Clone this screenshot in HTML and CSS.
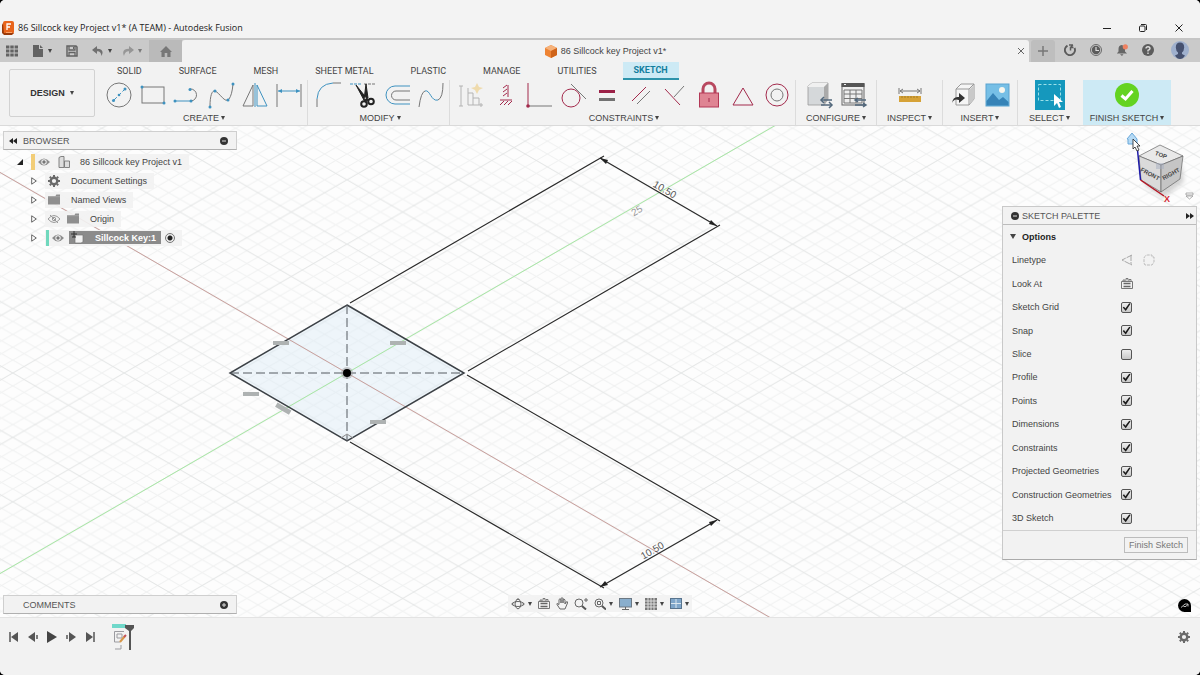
FILE: index.html
```html
<!DOCTYPE html>
<html lang="en">
<head>
<meta charset="utf-8">
<title>86 Sillcock key Project v1* (A TEAM) - Autodesk Fusion</title>
<link rel="stylesheet" href="styles.css">
</head>
<body>
<svg class="defs" width="0" height="0" aria-hidden="true">
  <symbol id="eye" viewBox="0 0 12 8"><path d="M0 4Q6-3 12 4Q6 11 0 4Z" fill="#8d8d8d"/><circle cx="6" cy="4" r="2.7" fill="#f2f2f2"/><circle cx="6" cy="4" r="1.7" fill="#777"/></symbol>
  <symbol id="folder" viewBox="0 0 13 11"><path d="M0 2H8L9 0H13V11H0Z" fill="#8f8f8f"/><path d="M0 2.500H13" stroke="#a9a9a9"/></symbol>
  <symbol id="gear" viewBox="0 0 12 12"><circle cx="6" cy="6" r="3.300" fill="none" stroke="#6a6a6a" stroke-width="2.400"/><path d="M6 0V2M6 10V12M0 6H2M10 6H12M1.800 1.800L3 3M9 9l1.200 1.200M10.200 1.800L9 3M3 9l-1.200 1.200" stroke="#6a6a6a" stroke-width="2"/></symbol>
  <symbol id="expand" viewBox="0 0 6 8"><path d="M.7.8L5.300 4L.7 7.200Z" fill="#fff" stroke="#555" stroke-width=".9"/></symbol>
  <symbol id="lookat" viewBox="0 0 12 11"><path d="M.5 3.500H11.500V10.500H.5ZM2 3.500V2H4V3.500M5 2.500V.5H7V2.500M8 3.500V1.500H10V3.500" fill="none" stroke="#777"/><path d="M2.500 5.500H9.500M2.500 8.500H9.500" stroke="#666" stroke-width="1.500"/></symbol>
</svg>
<div class="app">
  <header class="titlebar">
    <svg class="app-icon" width="12" height="14" viewBox="0 0 12 14"><rect x="1" width="11" height="13" rx="2" fill="#e8641b"/><path d="M1 2L0 4V12L2 14H10L12 12H2Z" fill="#9b3908"/><path d="M5 9V3H9M5 6H8" fill="none" stroke="#fff" stroke-width="1.300"/><path d="M4 11.500H10" stroke="#ffb27c" stroke-width=".8"/></svg>
    <h1 class="app-title">86 Sillcock key Project v1* (A TEAM) - Autodesk Fusion</h1>
    <div class="window-controls">
      <button aria-label="Minimize"><svg width="10" height="10" viewBox="0 0 10 10"><path d="M1 5.500H9" stroke="#222"/></svg></button>
      <button aria-label="Restore"><svg width="10" height="10" viewBox="0 0 10 10"><rect x="1.500" y="3" width="5.500" height="5.500" rx="1" fill="none" stroke="#222"/><path d="M3 1.500H7.500Q8.500 1.500 8.500 2.500V7" fill="none" stroke="#222"/></svg></button>
      <button aria-label="Close"><svg width="10" height="10" viewBox="0 0 10 10"><path d="M1.500 1.500L8.500 8.500M8.500 1.500L1.500 8.500" stroke="#222"/></svg></button>
    </div>
  </header>

  <div class="tabbar">
    <div class="quick">
      <button aria-label="Data panel"><svg width="12" height="12" viewBox="0 0 12 12"><path d="M0 2H12M0 6H12M0 10H12" stroke="#636363" stroke-width="3" stroke-dasharray="3.400 .9"/></svg></button>
      <button class="file" aria-label="File"><svg width="12" height="12" viewBox="0 0 12 12"><path d="M1 0H7V4H11V12H1Z" fill="#636363"/><path d="M8 0L11 3H8Z" fill="#636363"/></svg><i class="caret"></i></button>
      <button class="save" aria-label="Save"><svg width="12" height="12" viewBox="0 0 12 12"><path d="M1 1H10L11 2V11H1Z" fill="none" stroke="#636363" stroke-width="1.500"/><path d="M3 1V5H9V1M3 11V7.500H9V11" fill="none" stroke="#636363" stroke-width="1.300"/><path d="M7.500 2V4" stroke="#636363"/></svg></button>
      <button class="undo" aria-label="Undo"><svg width="12" height="12" viewBox="0 0 12 12"><path d="M5 1L0 5L5 9V6.300Q9 6 9.500 11Q13 4 5 3.700Z" fill="#707070"/></svg><i class="caret"></i></button>
      <button class="redo" aria-label="Redo"><svg width="12" height="12" viewBox="0 0 12 12"><path d="M7 1L12 5L7 9V6.300Q3 6 2 11Q-1 4 7 3.700Z" fill="#969696"/></svg><i class="caret"></i></button>
    </div>
    <button class="home" aria-label="Home"><svg width="12" height="11" viewBox="0 0 12 11"><path d="M0 6L6 0L12 6H10.500V11H7.300V7H4.700V11H1.500V6Z" fill="#777"/></svg></button>
    <div class="doc-tab">
      <span class="doc-name"><svg width="12" height="13" viewBox="0 0 12 13"><path d="M6 0L12 3V10L6 13L0 10V3Z" fill="#ee8434"/><path d="M6 0L12 3L6 6L0 3Z" fill="#f6b27b"/><path d="M6 6L12 3V10L6 13Z" fill="#cf641a"/></svg>86 Sillcock key Project v1*</span>
      <button class="tab-close" aria-label="Close document"><svg width="8" height="8" viewBox="0 0 8 8"><path d="M1 1L7 7M7 1L1 7" stroke="#666"/></svg></button>
    </div>
    <button class="new-tab" aria-label="New tab"><svg width="10" height="10" viewBox="0 0 10 10"><path d="M5 0V10M0 5H10" stroke="#777" stroke-width="1.500"/></svg></button>
    <div class="account">
      <button aria-label="Extensions"><svg width="12" height="12" viewBox="0 0 12 12"><path d="M3.500 1.700A5 5 0 1 0 10.500 4" fill="none" stroke="#5c5c5c" stroke-width="2"/><path d="M6.500 6.500V3.500H9.500M6.500 3.500L9 1M5 1H9" fill="none" stroke="#5c5c5c" stroke-width="1.500"/></svg></button>
      <button aria-label="Job status"><svg width="12" height="12" viewBox="0 0 12 12"><circle cx="6" cy="6" r="5.500" fill="none" stroke="#6a6a6a"/><circle cx="6" cy="6" r="4.200" fill="#5c5c5c"/><path d="M6 3V6.500H9" fill="none" stroke="#ddd" stroke-width="1.200"/></svg></button>
      <button aria-label="Notifications"><svg width="12" height="12" viewBox="0 0 12 12"><path d="M5.500 1Q2.500 1.500 2.500 5V7.500L.8 9.500H11L9 7.500V5Q9 1.500 5.500 1ZM4 10.200H7.500L6 12Z" fill="#666"/><circle cx="9.300" cy="2.800" r="2.600" fill="#ee8161"/></svg></button>
      <button aria-label="Help"><svg width="12" height="12" viewBox="0 0 12 12"><circle cx="6" cy="6" r="6" fill="#5c5c5c"/><path d="M4 4.500Q4 2.700 6 2.700T8 4.500Q8 5.600 6 6.300V7.500M6 8.500V10" fill="none" stroke="#ddd" stroke-width="1.400"/></svg></button>
      <button class="avatar" aria-label="Profile"><svg width="18" height="18" viewBox="0 0 18 18"><circle cx="9" cy="9" r="9" fill="#9fb0cd"/><path d="M9 1.500Q13.200 1.500 13.200 6.500Q13 10 11 11.500V13L14 14.500Q12 18 9 18T4 14.500L7 13V11.500Q5 10 4.800 6.500Q4.800 1.500 9 1.500Z" fill="#46516f"/></svg></button>
    </div>
  </div>

  <div class="ribbon">
    <button class="workspace">DESIGN <i class="caret"></i></button>
    <div class="ribbon-main">
      <nav class="ribbon-tabs">
        <button>SOLID</button><button>SURFACE</button><button>MESH</button><button>SHEET METAL</button><button>PLASTIC</button><button>MANAGE</button><button>UTILITIES</button><button class="active">SKETCH</button>
      </nav>
      <div class="groups">
        <section class="group">
          <div class="tools">
            <button aria-label="Circle"><svg viewBox="0 0 30 30"><circle cx="15" cy="15" r="12" class="g"/><path d="M10 20L20 10" class="b" stroke-dasharray="4 2"/><g class="p"><circle cx="9.500" cy="20.500" r="1.500"/><circle cx="15" cy="15" r="1.300"/><circle cx="21" cy="9" r="1.500"/></g></svg></button>
            <button aria-label="Rectangle"><svg viewBox="0 0 30 30"><rect x="4" y="7" width="22" height="16" class="g"/><g class="p"><circle cx="4" cy="7" r="1.500"/><circle cx="26" cy="23" r="1.500"/></g></svg></button>
            <button aria-label="Line"><svg viewBox="0 0 30 30"><path d="M3 21H19" class="b"/><path d="M19 21A6 6 0 0 0 18 9" class="g"/><g class="p"><circle cx="3" cy="21" r="1.500"/><circle cx="19" cy="21" r="1.500"/><circle cx="18" cy="9.500" r="1.500"/></g></svg></button>
            <button aria-label="Spline"><svg viewBox="0 0 30 30"><path d="M4 26C4 16 6 10 9 11C14 13 19 24 23 19Q26 15 27 4" class="g"/><g class="p"><circle cx="4" cy="27" r="1.500"/><circle cx="9" cy="11" r="1.500"/><circle cx="22" cy="20" r="1.500"/><circle cx="27" cy="4" r="1.500"/></g></svg></button>
            <button aria-label="Mirror"><svg viewBox="0 0 30 30"><path d="M13 5V26H3Z" class="g"/><path d="M17 5V26H27Z" class="b"/><path d="M15 3V27" class="b"/></svg></button>
            <button aria-label="Sketch dimension"><svg viewBox="0 0 30 30"><path d="M3 4V27M27 4V27" class="g"/><path d="M4 11H26" class="b"/><path d="M4 11l4-2v4ZM26 11l-4-2v4Z" class="p"/></svg></button>
          </div>
          <button class="label">CREATE <i class="caret"></i></button>
        </section>
        <section class="group">
          <div class="tools">
            <button aria-label="Fillet"><svg viewBox="0 0 30 30"><path d="M3 27V19" class="g"/><path d="M3 19Q4 4 19 3" class="b"/><path d="M19 3H27" class="g"/></svg></button>
            <button aria-label="Trim"><svg viewBox="0 0 30 30"><path d="M2 4H14" class="b" stroke-dasharray="3 1"/><path d="M16 4H28" class="g" stroke-dasharray="3 1"/><path d="M8 5L20 20L17 22ZM18 4L16 20L20 18Z" fill="#222" stroke="#222"/><circle cx="16" cy="24" r="2.800" fill="none" stroke="#222" stroke-width="2"/><circle cx="23" cy="21.500" r="2.800" fill="none" stroke="#222" stroke-width="2"/></svg></button>
            <button aria-label="Offset"><svg viewBox="0 0 30 30"><path d="M28 6H13A9 9 0 0 0 13 24H28" class="b"/><path d="M28 11H14A4 4 0 0 0 14 20H28" class="g"/></svg></button>
            <button aria-label="Extend curve"><svg viewBox="0 0 30 30"><path d="M3 27Q5 12 9 11" class="g"/><path d="M9 11C14 9 15 22 22 20" class="b"/><path d="M22 20Q27 18 27 3" class="g"/></svg></button>
          </div>
          <button class="label">MODIFY <i class="caret"></i></button>
        </section>
        <section class="group">
          <div class="tools">
            <button aria-label="Auto constrain"><svg viewBox="0 0 30 30" opacity=".5"><path d="M5 6V26M12 8V25H27M12 13H17V25M17 18H23V25" class="g"/><path d="M3 6H7M3 26H7M25 23V27" class="g"/><path d="M21 3L23 7L27 8L23 10L21 14L19 10L15 8L19 7Z" fill="#edc56b"/></svg></button>
            <button aria-label="Horizontal/Vertical"><svg viewBox="0 0 30 30"><path d="M18 5V17M10 20H22M13 8l4-3M13 12l4-3M13 16l4-3M10 25l4-4M14 25l4-4M18 25l4-4" class="r"/></svg></button>
            <button aria-label="Coincident"><svg viewBox="0 0 30 30"><path d="M4 3V26" class="r"/><path d="M4 26H28" class="g"/><circle cx="4" cy="26" r="1.800" fill="#a32a4c"/></svg></button>
            <button aria-label="Tangent"><svg viewBox="0 0 30 30"><circle cx="13" cy="18" r="9" class="r"/><path d="M13 4L28 19" class="g"/></svg></button>
            <button aria-label="Equal"><svg viewBox="0 0 30 30"><path d="M7 11.500H23" stroke="#9b2147" stroke-width="3"/><path d="M7 19.500H23" stroke="#727272" stroke-width="3"/></svg></button>
            <button aria-label="Parallel"><svg viewBox="0 0 30 30"><path d="M6 21L20 7" class="r"/><path d="M11 24L24 11" class="g"/></svg></button>
            <button aria-label="Perpendicular"><svg viewBox="0 0 30 30"><path d="M5 9L20 25" class="r"/><path d="M14 17L24 6" class="g"/></svg></button>
            <button aria-label="Fix"><svg viewBox="0 0 30 30"><path d="M9 13V9A6 6 0 0 1 21 9V13" fill="none" stroke="#b8485f" stroke-width="3"/><rect x="5.500" y="13" width="19" height="14" fill="#df8493" stroke="#b33856"/><path d="M15 18V22" class="r"/></svg></button>
            <button aria-label="Midpoint"><svg viewBox="0 0 30 30"><path d="M15 8L25 25H5Z" class="r"/></svg></button>
            <button aria-label="Concentric"><svg viewBox="0 0 30 30"><circle cx="15" cy="15" r="11" class="r"/><circle cx="15" cy="15" r="6" class="g"/></svg></button>
          </div>
          <button class="label">CONSTRAINTS <i class="caret"></i></button>
        </section>
        <section class="group wide">
          <div class="tools">
            <button aria-label="Configure model"><svg viewBox="0 0 30 30"><path d="M4 6L8 3H24V19L20 25H4Z" fill="#d5d8da" stroke="#999" stroke-width=".8"/><path d="M4 6L8 3H24L20 7H4Z" fill="#f0f0f0"/><path d="M20 7L24 3V19L20 25Z" fill="#aaa"/><path d="M17 20H28M17 25H28" stroke="#52677b" stroke-width="1.500"/><path d="M20 17L17 20L20 23M25 22L28 25L25 28" fill="none" stroke="#52677b" stroke-width="1.500"/></svg></button>
            <button aria-label="Configuration table"><svg viewBox="0 0 30 30"><rect x="4" y="4" width="22" height="21" fill="#eee" stroke="#666"/><path d="M3.500 5H26.500" stroke="#555" stroke-width="4"/><path d="M6 4.500H8" stroke="#eee"/><path d="M6 10H24V23H6ZM6 14H24M6 18.500H24M12 10V23M18 10V23" fill="none" stroke="#777"/><path d="M17 20H28M17 25H28M20 18L17 20L20 22M25 23L28 25L25 27" fill="none" stroke="#52677b" stroke-width="1.500"/></svg></button>
          </div>
          <button class="label">CONFIGURE <i class="caret"></i></button>
        </section>
        <section class="group inspect">
          <div class="tools">
            <button aria-label="Measure"><svg viewBox="0 0 30 30"><path d="M4 8V14M26 8V14M5 11H25M8 9L5 11L8 13M22 9L25 11L22 13" class="g"/><rect x="4" y="16" width="22" height="6" fill="#d6a237"/><path d="M7 16V18M10 16V18M13 16V18M16 16V18M19 16V18M22 16V18" stroke="#8f6d24" stroke-width=".7"/></svg></button>
          </div>
          <button class="label">INSPECT <i class="caret"></i></button>
        </section>
        <section class="group insert">
          <div class="tools">
            <button aria-label="Insert derive"><svg viewBox="0 0 30 30"><path d="M8 9L13 4H26V19L21 25H8Z" fill="#f5f5f5" stroke="#999"/><path d="M8 9H21V25M21 9L26 4" fill="none" stroke="#999"/><path d="M22 9L26 5V19L22 24Z" fill="#c9c9c9"/><path d="M4 23Q5 16 11 17V13L17 18L11 23V20Q6 18 4 23Z" fill="#333"/></svg></button>
            <button aria-label="Canvas"><svg viewBox="0 0 30 30"><rect x="4" y="4" width="23" height="22" fill="#76bfe6" stroke="#5aa3cf"/><circle cx="20" cy="10" r="3" fill="#f6f6ee"/><path d="M4.500 21L11 13L17 20L21 17L26.500 22V25.500H4.500Z" fill="#3683b7"/></svg></button>
          </div>
          <button class="label">INSERT <i class="caret"></i></button>
        </section>
        <section class="group select">
          <div class="tools">
            <button aria-label="Select"><svg viewBox="0 0 30 30"><rect width="30" height="30" fill="#1598bd"/><rect x="3.500" y="4.500" width="22" height="16" fill="none" stroke="#9ce0e8" stroke-dasharray="3 2"/><path d="M19 14V26L22 23L24 28L26 27L24 22H28Z" fill="#fff"/></svg></button>
          </div>
          <button class="label">SELECT <i class="caret"></i></button>
        </section>
        <section class="group finish">
          <div class="tools">
            <button aria-label="Finish sketch"><svg viewBox="0 0 30 30"><circle cx="15" cy="15" r="12" fill="#63d321"/><path d="M9.500 15.500L13.500 19L20.500 11" fill="none" stroke="#fff" stroke-width="3"/></svg></button>
          </div>
          <button class="label">FINISH SKETCH <i class="caret"></i></button>
        </section>
      </div>
    </div>
  </div>

  <main class="viewport">
    <svg class="canvas" viewBox="0 126 1200 491" preserveAspectRatio="xMidYMid slice" role="img" aria-label="Sketch canvas">
      <defs>
        <pattern id="grid" x="347" y="373" width="111.400" height="64.400" patternUnits="userSpaceOnUse">
          <path d="M22.280 0L111.400 51.520M44.560 0L111.400 38.640M66.840 0L111.400 25.760M89.120 0L111.400 12.880M0 12.880L89.120 64.400M0 25.760L66.840 64.400M0 38.640L44.560 64.400M0 51.520L22.280 64.400" stroke="#f0f1f1" stroke-width="1"/>
          <path d="M89.120 0L0 51.520M66.840 0L0 38.640M44.560 0L0 25.760M22.280 0L0 12.880M111.400 12.880L22.280 64.400M111.400 25.760L44.560 64.400M111.400 38.640L66.840 64.400M111.400 51.520L89.120 64.400" stroke="#f0f1f1" stroke-width="1"/>
          <path d="M0 0L111.400 64.400M0 64.400L111.400 0" stroke="#e2e4e4" stroke-width="1"/>
        </pattern>
      </defs>
      <rect x="-1200" y="-400" width="3600" height="1500" fill="#fdfdfd"/>
      <rect x="-1200" y="-400" width="3600" height="1500" fill="url(#grid)"/>
      <path d="M347 305L464 373L347 441L230 373Z" fill="#dcecf7" fill-opacity=".45"/>
      <path d="M-345 -27L1039 773" stroke="#c9a09d" stroke-width="1"/>
      <path d="M-345 773L1039 -27" stroke="#a8e8a5" stroke-width="1"/>
      <path d="M347 305L464 373L347 441L230 373Z" fill="none" stroke="#3c4146" stroke-width="1.500"/>
      <path d="M230 373H464M347 305V441" stroke="#555b60" stroke-width="1" stroke-dasharray="9 4"/>
      <g stroke="#2b2b2b" stroke-width="1.200" fill="none">
        <path d="M350 303L604 156M468 371L720 225M467 375L720 521M350 442L604 588"/>
        <path d="M600 158L717 226M600 587L717 520"/>
      </g>
      <path d="M600 158L608 160L606 164ZM717 226L709 224L711 220ZM600 587L608 585L605 581ZM717 520L709 522L711 526Z" fill="#222"/>
      <g fill="#aeb2b2"><rect x="273" y="341" width="16" height="4"/><rect x="390" y="341" width="16" height="4"/><rect x="243" y="392" width="16" height="4"/><rect x="370" y="420" width="16" height="4"/><rect x="275" y="406" width="16" height="5" transform="rotate(30 283 409)"/></g>
      <path d="M341 438L347 434L353 438" fill="none" stroke="#888"/>
      <circle cx="347" cy="373" r="6" fill="#999" fill-opacity=".5"/><circle cx="347" cy="373" r="4" fill="#000"/>
      <text class="dim" x="665" y="193" transform="rotate(30 665 189)">10.50</text>
      <text class="dim" x="652" y="554" transform="rotate(-30 652 550)">10.50</text>
      <text class="dim faint" x="637" y="214" transform="rotate(-30 637 211)">25</text>
    </svg>
    <div class="overlay">
      <aside class="left">
        <section>
          <header class="panel-head"><svg width="8" height="6" viewBox="0 0 8 6"><path d="M4 0V6L0 3ZM8 0V6L4 3Z" fill="#222"/></svg><h2>BROWSER</h2><button class="round" aria-label="Collapse browser"><svg width="8" height="8" viewBox="0 0 8 8"><circle cx="4" cy="4" r="4" fill="#333"/><path d="M2 4H6" stroke="#ddd"/></svg></button></header>
          <ul class="tree">
            <li class="root"><svg width="6" height="6" viewBox="0 0 6 6"><path d="M6 0V6H0Z" fill="#222"/></svg><div class="chip"><i class="bar amber"></i><svg width="12" height="8"><use href="#eye"/></svg><svg class="comp" width="12" height="12" viewBox="0 0 12 12"><path d="M1 1.500L3 .5H6V11.500H1ZM6.500 5H11.500V11.500H6.500Z" fill="#ddd" stroke="#777" stroke-width=".9"/></svg><span>86 Sillcock key Project v1</span></div></li>
            <li><svg width="6" height="8"><use href="#expand"/></svg><div class="chip"><svg class="lead" width="12" height="12"><use href="#gear"/></svg><span>Document Settings</span></div></li>
            <li><svg width="6" height="8"><use href="#expand"/></svg><div class="chip"><svg class="lead" width="12" height="11"><use href="#folder"/></svg><span>Named Views</span></div></li>
            <li><svg width="6" height="8"><use href="#expand"/></svg><div class="chip"><svg class="lead" width="12" height="10" viewBox="0 0 12 10"><path d="M0 5Q6-2 12 5Q6 12 0 5ZM2 1L10 9" fill="none" stroke="#999"/><circle cx="6" cy="5" r="1.700" fill="none" stroke="#999"/></svg><svg class="second" width="12" height="11"><use href="#folder"/></svg><span>Origin</span></div></li>
            <li><svg width="6" height="8"><use href="#expand"/></svg><div class="chip current"><i class="bar teal"></i><svg width="12" height="8"><use href="#eye"/></svg><b class="selected"><svg width="13" height="13" viewBox="0 0 13 13"><path d="M4 4H12V11L10 12H4Z" fill="#f1f1f1" stroke="#777" stroke-width=".7"/><path d="M3 0V6M0 3H6M1 6H5" stroke="#333"/></svg>Sillcock Key:1</b><input type="radio" checked aria-label="Activate Sillcock Key:1"></div></li>
          </ul>
        </section>
        <header class="panel-head comments"><h2>COMMENTS</h2><button class="round" aria-label="Expand comments"><svg width="8" height="8" viewBox="0 0 8 8"><circle cx="4" cy="4" r="4" fill="#333"/><path d="M2 4H6M4 2V6" stroke="#ddd"/></svg></button></header>
      </aside>

      <div class="navbar">
        <button aria-label="Orbit"><svg width="14" height="12" viewBox="0 0 14 12"><ellipse cx="7" cy="6" rx="5.500" ry="2.500" class="s"/><path d="M7 1Q4 2 4 6T7 11Q10 10 10 6T7 1M5.500 2L7 .5L8.500 2M2 4.500L.8 6L2 7.500M12 4.500L13.200 6L12 7.500" class="s"/></svg><i class="caret"></i></button>
        <button aria-label="Look at"><svg width="12" height="11"><use href="#lookat"/></svg></button>
        <button aria-label="Pan"><svg width="12" height="13" viewBox="0 0 12 13"><path d="M4 12L1 7.500Q0 5.500 3 7.500V2.500Q4 1 5 2.500V6V1.500Q6-.2 7 1.500V6V2.500Q8 1 9 3V7L10 5Q12 4 11.500 6L9 12Z" class="s"/></svg></button>
        <button aria-label="Zoom"><svg width="14" height="12" viewBox="0 0 14 12"><circle cx="5" cy="5" r="4" class="s"/><path d="M8 8L12 11.500" stroke="#555" stroke-width="2"/><path d="M10 2H14M12 0V4" class="s"/></svg></button>
        <button aria-label="Fit"><svg width="12" height="12" viewBox="0 0 12 12"><circle cx="5" cy="5" r="4" class="s"/><path d="M3.500 3.500H6.500V6.500H3.500Z" class="s"/><path d="M8 8L12 11.500" stroke="#555" stroke-width="2"/></svg><i class="caret"></i></button>
        <button aria-label="Display settings"><svg width="13" height="12" viewBox="0 0 13 12"><rect x=".5" y=".5" width="12" height="8.500" fill="#89aecd" stroke="#6c7883"/><path d="M6.500 9V11M3 11.500H10" stroke="#666"/></svg><i class="caret"></i></button>
        <button aria-label="Grid and snaps"><svg width="12" height="12" viewBox="0 0 12 12"><rect width="12" height="12" fill="#777"/><path d="M0 3H12M0 6H12M0 9H12M3 0V12M6 0V12M9 0V12" stroke="#ddd"/></svg><i class="caret"></i></button>
        <button aria-label="Viewports"><svg width="12" height="11" viewBox="0 0 12 11"><rect x=".5" y=".5" width="11" height="10" fill="#7fa6ca" stroke="#58748e"/><path d="M6 1V10M1 5.500H11" stroke="#dbe7ef"/></svg><i class="caret"></i></button>
      </div>

      <aside class="right">
        <svg class="cube" width="77" height="75" viewBox="1120 131 77 75" role="img" aria-label="View cube">
          <defs><filter id="soft"><feGaussianBlur stdDeviation="2"/></filter></defs>
          <path d="M1143 184L1163 198L1184 182L1182 165Z" fill="#aaa" opacity=".5" filter="url(#soft)"/>
          <path d="M1139 156L1160 145L1183 156L1161 165Z" fill="#e9e9e9" stroke="#666" stroke-width=".7"/>
          <path d="M1139 156L1161 165V192L1141 180Z" fill="#dadada" stroke="#666" stroke-width=".7"/>
          <path d="M1183 156L1161 165V192L1180 179Z" fill="#c5c5c5" stroke="#666" stroke-width=".7"/>
          <rect x="1156" y="163" width="8" height="6" fill="#a5adc0" opacity=".5"/>
          <text class="face" x="1161" y="157" transform="rotate(20 1161 155)">TOP</text>
          <text class="face" x="1150" y="176" transform="rotate(28 1150 174)">FRONT</text>
          <text class="face" x="1171" y="176" transform="rotate(-29 1171 174)">RIGHT</text>
          <path d="M1137.500 150L1140.500 180" stroke="#1d1aa8" stroke-width="1.500"/>
          <path d="M1140.500 180L1164 196" stroke="#b51524" stroke-width="1.500"/>
          <text class="axis" x="1167" y="202">X</text>
          <path d="M1127 139L1132 133L1137 139V144H1128V139Z" fill="#b5daf5" stroke="#69a8da"/>
          <path d="M1133 139V149L1135 147L1137 151L1139 150L1137 146H1140Z" fill="#fff" stroke="#222" stroke-width=".8"/>
          <path d="M1186 193H1193V195H1186ZM1186 196H1193L1189.500 199Z" fill="#fff" stroke="#999" stroke-width=".8"/>
        </svg>
        <section class="palette">
          <header class="palette-head"><svg width="8" height="8" viewBox="0 0 8 8"><circle cx="4" cy="4" r="4" fill="#333"/><path d="M2 4H6" stroke="#ddd"/></svg><h2>SKETCH PALETTE</h2><svg width="8" height="6" viewBox="0 0 8 6"><path d="M0 0V6L4 3ZM4 0V6L8 3Z" fill="#222"/></svg></header>
          <div class="options">
            <h3><i class="caret"></i>Options</h3>
            <div class="option"><span>Linetype</span><span class="icons"><svg width="12" height="12" viewBox="0 0 12 12"><path d="M11 1L1 6L11 11M10 1V11" fill="none" stroke="#a8a8a8" stroke-dasharray="6 1"/></svg><svg width="12" height="12" viewBox="0 0 12 12"><path d="M1 4Q2 1 5 1H9V3H11V8L9 11H2L1 9Z" fill="none" stroke="#bbb" stroke-dasharray="3 1"/></svg></span></div>
            <div class="option"><span>Look At</span><button aria-label="Look At"><svg width="12" height="11"><use href="#lookat"/></svg></button></div>
            <label class="option">Sketch Grid<input type="checkbox" checked></label>
            <label class="option">Snap<input type="checkbox" checked></label>
            <label class="option">Slice<input type="checkbox"></label>
            <label class="option">Profile<input type="checkbox" checked></label>
            <label class="option">Points<input type="checkbox" checked></label>
            <label class="option">Dimensions<input type="checkbox" checked></label>
            <label class="option">Constraints<input type="checkbox" checked></label>
            <label class="option">Projected Geometries<input type="checkbox" checked></label>
            <label class="option">Construction Geometries<input type="checkbox" checked></label>
            <label class="option">3D Sketch<input type="checkbox" checked></label>
          </div>
          <footer><button class="finish-btn">Finish Sketch</button></footer>
        </section>
        <button class="assistant" aria-label="Assistant"><svg width="13" height="13" viewBox="0 0 13 13"><path d="M6.500 0A6.500 6.500 0 0 1 13 6.500V13H6.500A6.500 6.500 0 0 1 6.500 0Z" fill="#000"/><path d="M3 8.500L7 5H10V7.500M5.500 7.500H8L10 5" fill="none" stroke="#bbb"/></svg></button>
      </aside>
    </div>
  </main>

  <footer class="timeline">
    <div class="playback">
      <button aria-label="Go to start"><svg width="10" height="10" viewBox="0 0 10 10"><path d="M1 0V10" stroke="#555" stroke-width="1.500"/><path d="M9 0V10L2 5Z" fill="#555"/></svg></button>
      <button aria-label="Step back"><svg width="10" height="10" viewBox="0 0 10 10"><path d="M7 0V10L0 5Z" fill="#555"/><path d="M9 3V7" stroke="#555" stroke-width="1.500"/></svg></button>
      <button aria-label="Play"><svg width="10" height="12" viewBox="0 0 10 12"><path d="M0 0L10 6L0 12Z" fill="#444"/></svg></button>
      <button aria-label="Step forward"><svg width="10" height="10" viewBox="0 0 10 10"><path d="M3 0V10L10 5Z" fill="#555"/><path d="M1 3V7" stroke="#555" stroke-width="1.500"/></svg></button>
      <button aria-label="Go to end"><svg width="10" height="10" viewBox="0 0 10 10"><path d="M9 0V10" stroke="#555" stroke-width="1.500"/><path d="M1 0V10L8 5Z" fill="#555"/></svg></button>
    </div>
    <svg class="feature" width="24" height="28" viewBox="0 0 24 28" role="img" aria-label="Sketch1"><rect width="14" height="4" fill="#70d8ca"/><path d="M2.500 7.500H12M2.500 7.500V18H8M5 10H10V14H5ZM3 25H9V21" fill="none" stroke="#9b9ba0"/><path d="M8 18L13 12" stroke="#d69648" stroke-width="2"/><path d="M12 13L14 11" stroke="#c4535c" stroke-width="2"/><path d="M13 1H22V4L19 7V26H17V7L13 4Z" fill="#555"/></svg>
    <button class="settings" aria-label="Timeline settings"><svg width="12" height="12"><use href="#gear"/></svg></button>
  </footer>
</div>
</body>
</html>
```

FILE: styles.css
```css
* { box-sizing: border-box; }
body { margin: 0; background: #000; color: #444; font: 9px/12px "Liberation Sans", Arial, sans-serif; }
h1, h2, h3, ul { margin: 0; padding: 0; font-size: inherit; font-weight: normal; list-style: none; }
button { display: inline-flex; align-items: center; justify-content: center; margin: 0; padding: 0; border: 0; background: none; color: inherit; font: inherit; }
svg { display: block; flex: none; }
.defs { position: absolute; }
.caret { width: 0; height: 0; flex: none; border: 2px solid transparent; border-top: 4px solid #444; border-bottom: 0; }
.s { fill: none; stroke: #666; }
.app { display: flex; flex-direction: column; min-height: 100vh; overflow: hidden; border-radius: 5px; background: #f2f2f2; }

.titlebar { display: flex; align-items: flex-end; height: 38px; padding: 0 9px 3px 2px; background: #f3f3f3; }
.app-icon { margin-right: 4px; }
.app-title { flex: 1; color: #222; font: 9px/14px "Open Sans", "Noto Sans", sans-serif; }
.window-controls { display: flex; gap: 12px; }
.window-controls button { width: 24px; height: 14px; }

.tabbar { display: flex; height: 24px; border-top: 2px solid #c5c5c5; background: #cacaca; }
.quick { display: flex; align-items: center; padding: 0 7px 1px 6px; }
.quick button { gap: 4px; margin-right: 14px; }
.quick .undo { margin-right: 10px; }
.quick .redo { margin-right: 0; }
.quick .redo .caret { opacity: .6; }
.home { width: 33px; background: #bababa; }
.doc-tab { position: relative; display: flex; align-items: center; justify-content: center; flex: 1; margin-right: 2px; border-radius: 3px 3px 0 0; background: #f2f2f2; }
.doc-name { display: flex; align-items: center; gap: 4px; font-size: 9px; }
.tab-close { position: absolute; right: 4px; top: 7px; }
.new-tab { width: 24px; border-radius: 3px 3px 0 0; background: #bebebe; }
.account { display: flex; align-items: center; gap: 14px; padding: 0 11px 2px 9px; }
.avatar { margin-left: 3px; }

.ribbon { display: flex; height: 64px; border-bottom: 1px solid #dadada; background: #f2f2f2; }
.workspace { gap: 5px; width: 86px; margin: 7px 3px 8px 9px; border: 1px solid #d2d2d2; border-radius: 2px; color: #333; font-weight: bold; }
.ribbon-main { flex: 1; }
.ribbon-tabs { display: flex; gap: 15px; height: 18px; padding-left: 8px; }
.ribbon-tabs button { padding: 0 11px; font: 9px/12px Roboto, sans-serif; }
.ribbon-tabs .active { border-bottom: 2px solid #2d93ab; background: #cdeaf5; color: #127e9e; font-weight: bold; }
.groups { display: flex; height: 45px; }
.group { display: flex; flex-direction: column; align-items: center; padding: 0 1px 0 4px; border-right: 1px solid #dcdcdc; }
.tools { display: flex; }
.tools button { width: 34px; height: 30px; }
.tools svg { width: 30px; height: 30px; }
.tools .g, .tools .b, .tools .r { fill: none; }
.tools .g { stroke: #777; }
.tools .b { stroke: #3e92c0; }
.tools .r { stroke: #a32a4c; }
.tools .p { fill: #3e92c0; }
.label { gap: 2px; height: 15px; white-space: nowrap; }
.group.wide { padding: 0 6px; }
.group.inspect { padding: 0 10px; }
.group.insert { padding: 0 3px; }
.group.select { padding: 0 11px; margin-right: 2px; border: 0; }
.group.finish { width: 88px; padding: 0; border: 0; background: #cdeaf5; }

.viewport { position: relative; display: flex; flex: 1; min-height: 491px; background: #fdfdfd; }
.canvas { position: absolute; inset: 0; width: 100%; height: 100%; }
.dim { fill: #555; font-size: 10px; text-anchor: middle; }
.faint { fill: #999; }
.overlay { position: relative; display: grid; grid-template-columns: 234px 1fr 234px; flex: 1; padding: 5px 3px 3px; }
.left { display: flex; flex-direction: column; justify-content: space-between; }
.panel-head { display: flex; align-items: center; height: 19px; padding: 0 8px 0 5px; border: 1px solid #cfcfcf; border-bottom-color: #b0b0b0; background: #f2f2f2; color: #555; }
.panel-head h2 { flex: 1; margin-left: 6px; }
.comments h2 { margin-left: 14px; }
.tree { padding: 2px 0 0 14px; }
.tree li { display: flex; align-items: center; gap: 8px; height: 19px; padding-left: 14px; }
.tree .root { padding-left: 0; }
.chip { display: flex; align-items: center; height: 16px; padding-right: 7px; background: rgba(242, 242, 242, .9); }
.chip .lead { margin: 0 11px 0 3px; }
.chip .lead:has(+ .second) { margin-right: 7px; }
.second { margin-right: 11px; }
.bar { width: 4px; height: 16px; margin-right: 3px; }
.amber { background: #f2cd77; }
.teal { width: 3px; margin-left: 1px; background: #70d8bd; }
.comp { margin: 0 10px 0 8px; }
.selected { display: flex; align-items: center; gap: 11px; height: 13px; margin: 0 4px 0 5px; padding: 0 5px 0 2px; background: #8b8b8b; color: #fff; }
input { appearance: none; margin: 0; width: 10px; height: 10px; border: 1px solid #777; }
input[type="radio"] { border-radius: 50%; background: radial-gradient(#222 0 2px, #eee 3px); }

.navbar { align-self: end; justify-self: center; display: flex; align-items: center; gap: 6px; height: 17px; margin-bottom: 2px; padding: 0 3px; background: rgba(242, 242, 242, .9); }
.navbar button { gap: 3px; }
.right { display: flex; flex-direction: column; align-items: flex-end; }
.face { fill: #444; font-size: 6px; font-weight: bold; text-anchor: middle; }
.axis { fill: #d32632; font-size: 9px; font-weight: bold; text-anchor: middle; }
.palette { width: 195px; border: 1px solid #c9c9c9; border-bottom-color: #aaa; background: #f2f2f2; }
.palette-head { display: flex; align-items: center; height: 18px; padding: 0 2px 0 8px; border-bottom: 1px solid #bcbcbc; color: #555; }
.palette-head h2 { flex: 1; margin-left: 3px; }
.options { display: grid; grid-auto-rows: 1fr; min-height: 305px; }
.options h3 { display: flex; align-items: center; gap: 6px; padding-left: 7px; font-weight: bold; color: #222; }
.options h3 .caret { border-width: 5px 3px 0; }
.option { display: grid; grid-template-columns: 109px 1fr; align-items: center; justify-items: start; padding-left: 9px; white-space: nowrap; }
.icons { display: flex; gap: 10px; }
input[type="checkbox"] { display: grid; place-items: center; width: 11px; height: 11px; border: 1px solid #555; border-radius: 2px; background: linear-gradient(#eee, #c8c8c8); }
input[type="checkbox"]:checked::before { content: ""; width: 9px; height: 9px; background: #1a1a1a; clip-path: polygon(8% 55%, 22% 45%, 38% 65%, 80% 8%, 95% 14%, 42% 94%); }
.palette footer { display: flex; align-items: center; justify-content: flex-end; height: 29px; padding: 0 8px; border-top: 1px solid #d0d0d0; }
.finish-btn { padding: 1px 4px; border: 1px solid #bcbcbc; color: #777; }
.assistant { margin: auto 6px 2px 0; }

.timeline { display: flex; align-items: flex-start; height: 58px; padding: 6px 10px 0 9px; border-top: 1px solid #e3e3e3; background: #f2f2f2; }
.playback { display: flex; gap: 9px; padding-top: 7px; }
.playback button { width: 10px; height: 12px; }
.feature { margin-left: 17px; }
.settings { margin: 7px 0 0 auto; }
```
